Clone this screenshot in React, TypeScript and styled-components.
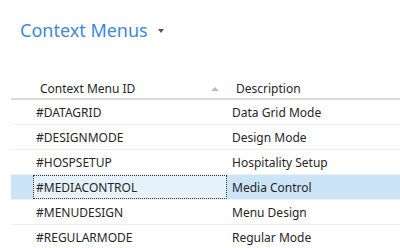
import React from 'react'
import styled, { createGlobalStyle } from 'styled-components'

const GlobalStyle = createGlobalStyle`
  body {
    margin: 0;
    background: #ffffff;
    font-family: "Noto Sans", "Open Sans", sans-serif;
  }
`

const Page = styled.div`
  width: 400px;
  height: 248px;
  overflow: hidden;
  padding-left: 11px;
  box-sizing: border-box;
`

const TitleBar = styled.div`
  display: flex;
  align-items: center;
  gap: 10px;
  height: 60px;
  padding-left: 9px;
  box-sizing: border-box;
`

const Title = styled.h1`
  margin: 0;
  font-size: 18px;
  font-weight: 400;
  color: #3c8ad8;
`

const Caret = styled.span`
  width: 0;
  height: 0;
  border-left: 3.5px solid transparent;
  border-right: 3.5px solid transparent;
  border-top: 4px solid #555;
  margin-top: 1px;
`

const Table = styled.div`
  margin-top: 15px;
`

const Row = styled.div<{ $header?: boolean }>`
  display: grid;
  grid-template-columns: 22px 194px 1fr;
  height: 25px;
  box-sizing: border-box;
  padding-top: ${p => (p.$header ? '4px' : '0')};
  border-bottom: ${p => (p.$header ? '2px solid #dadada' : '1px solid #efefef')};
  font-size: 12px;
  color: #262626;
`

const Cell = styled.div<{ $pad?: number; $sel?: 'dark' | 'light' }>`
  display: flex;
  align-items: center;
  padding-left: ${p => p.$pad ?? 0}px;
  background: ${p => (p.$sel === 'dark' ? '#cce4f7' : p.$sel === 'light' ? '#e5f1fb' : 'transparent')};
  white-space: nowrap;
  min-width: 0;
`

const FocusCell = styled(Cell)`
  outline: 1px dotted #333;
  outline-offset: -1px;
`

const HeaderCell = styled(Cell)`
  justify-content: space-between;
  padding-right: 8px;
`

const SortUp = styled.span`
  width: 0;
  height: 0;
  border-left: 4px solid transparent;
  border-right: 4px solid transparent;
  border-bottom: 4px solid #bcbcbc;
`

const rows = [
  ['#DATAGRID', 'Data Grid Mode'],
  ['#DESIGNMODE', 'Design Mode'],
  ['#HOSPSETUP', 'Hospitality Setup'],
  ['#MEDIACONTROL', 'Media Control'],
  ['#MENUDESIGN', 'Menu Design'],
  ['#REGULARMODE', 'Regular Mode'],
]

const selected = 3

export default function App() {
  return (
    <Page>
      <GlobalStyle />
      <TitleBar>
        <Title>Context Menus</Title>
        <Caret />
      </TitleBar>
      <Table>
        <Row $header>
          <Cell />
          <HeaderCell $pad={7}>
            <span>Context Menu ID</span>
            <SortUp />
          </HeaderCell>
          <Cell $pad={9}>Description</Cell>
        </Row>
        {rows.map(([id, desc], i) =>
          i === selected ? (
            <Row key={id}>
              <Cell $sel="dark" />
              <FocusCell $pad={3} $sel="light">{id}</FocusCell>
              <Cell $pad={5} $sel="dark">{desc}</Cell>
            </Row>
          ) : (
            <Row key={id}>
              <Cell />
              <Cell $pad={3}>{id}</Cell>
              <Cell $pad={5}>{desc}</Cell>
            </Row>
          )
        )}
      </Table>
    </Page>
  )
}
